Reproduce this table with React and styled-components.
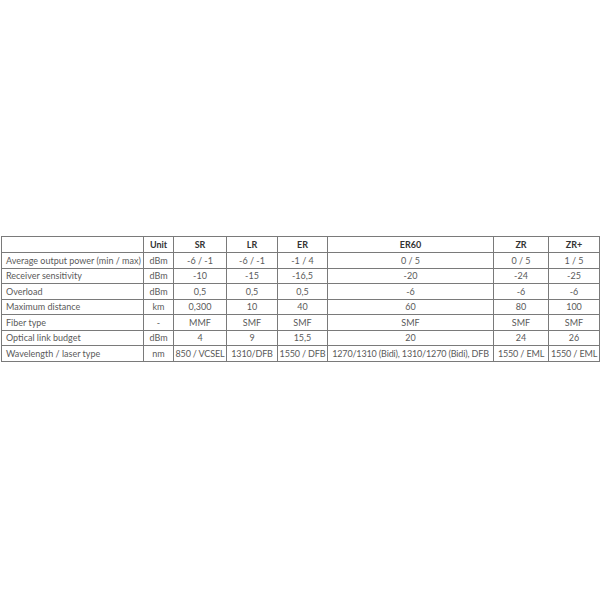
import React from 'react';
import styled, { createGlobalStyle } from 'styled-components';

const GlobalStyle = createGlobalStyle`
  html, body {
    margin: 0;
    padding: 0;
    background: #fff;
  }
`;

const columns = [
  { key: 'unit', label: 'Unit', width: 30 },
  { key: 'sr', label: 'SR', width: 53 },
  { key: 'lr', label: 'LR', width: 51 },
  { key: 'er', label: 'ER', width: 50 },
  { key: 'er60', label: 'ER60', width: 166 },
  { key: 'zr', label: 'ZR', width: 55 },
  { key: 'zrp', label: 'ZR+', width: 51 },
];

const rows = [
  ['Average output power (min / max)', 'dBm', '-6 / -1', '-6 / -1', '-1 / 4', '0 / 5', '0 / 5', '1 / 5'],
  ['Receiver sensitivity', 'dBm', '-10', '-15', '-16,5', '-20', '-24', '-25'],
  ['Overload', 'dBm', '0,5', '0,5', '0,5', '-6', '-6', '-6'],
  ['Maximum distance', 'km', '0,300', '10', '40', '60', '80', '100'],
  ['Fiber type', '-', 'MMF', 'SMF', 'SMF', 'SMF', 'SMF', 'SMF'],
  ['Optical link budget', 'dBm', '4', '9', '15,5', '20', '24', '26'],
  [
    'Wavelength / laser type',
    'nm',
    '850 / VCSEL',
    '1310/DFB',
    '1550 / DFB',
    '1270/1310 (Bidi), 1310/1270 (Bidi), DFB',
    '1550 / EML',
    '1550 / EML',
  ],
];

const Page = styled.div`
  min-height: 600px;
  display: flex;
  align-items: center;
  padding: 0 1px;
  box-sizing: border-box;
`;

const Table = styled.table`
  width: 598px;
  margin-top: -3px;
  border-collapse: collapse;
  table-layout: fixed;
  font-family: Lato, 'Open Sans', sans-serif;
  font-size: 9px;
  color: #5a5a5a;
`;

const Row = styled.tr`
  height: 15px;
  &:nth-child(odd) {
    height: 16px;
  }
`;

const HeadRow = styled.tr`
  height: 16px;
`;

const Cell = styled.td`
  border: 1px solid #7a7a7a;
  padding: ${(p) => (p.$left ? '0 4px' : '0 1px')};
  line-height: 13px;
  white-space: nowrap;
  text-align: ${(p) => (p.$left ? 'left' : 'center')};
  letter-spacing: ${(p) => (p.$tight ? '-0.15px' : 'normal')};
`;

const HeadCell = styled(Cell).attrs({ as: 'th' })`
  font-weight: bold;
  color: #333;
`;

const App = () => (
  <Page>
    <GlobalStyle />
    <Table>
      <colgroup>
        <col style={{ width: 142 }} />
        {columns.map((c) => (
          <col key={c.key} style={{ width: c.width }} />
        ))}
      </colgroup>
      <thead>
        <HeadRow>
          <HeadCell $left />
          {columns.map((c) => (
            <HeadCell key={c.key}>{c.label}</HeadCell>
          ))}
        </HeadRow>
      </thead>
      <tbody>
        {rows.map((r, ri) => (
          <Row key={r[0]}>
            {r.map((v, i) => (
              <Cell key={i} $left={i === 0} $tight={ri === rows.length - 1 && i > 1}>
                {v}
              </Cell>
            ))}
          </Row>
        ))}
      </tbody>
    </Table>
  </Page>
);

export default App;
